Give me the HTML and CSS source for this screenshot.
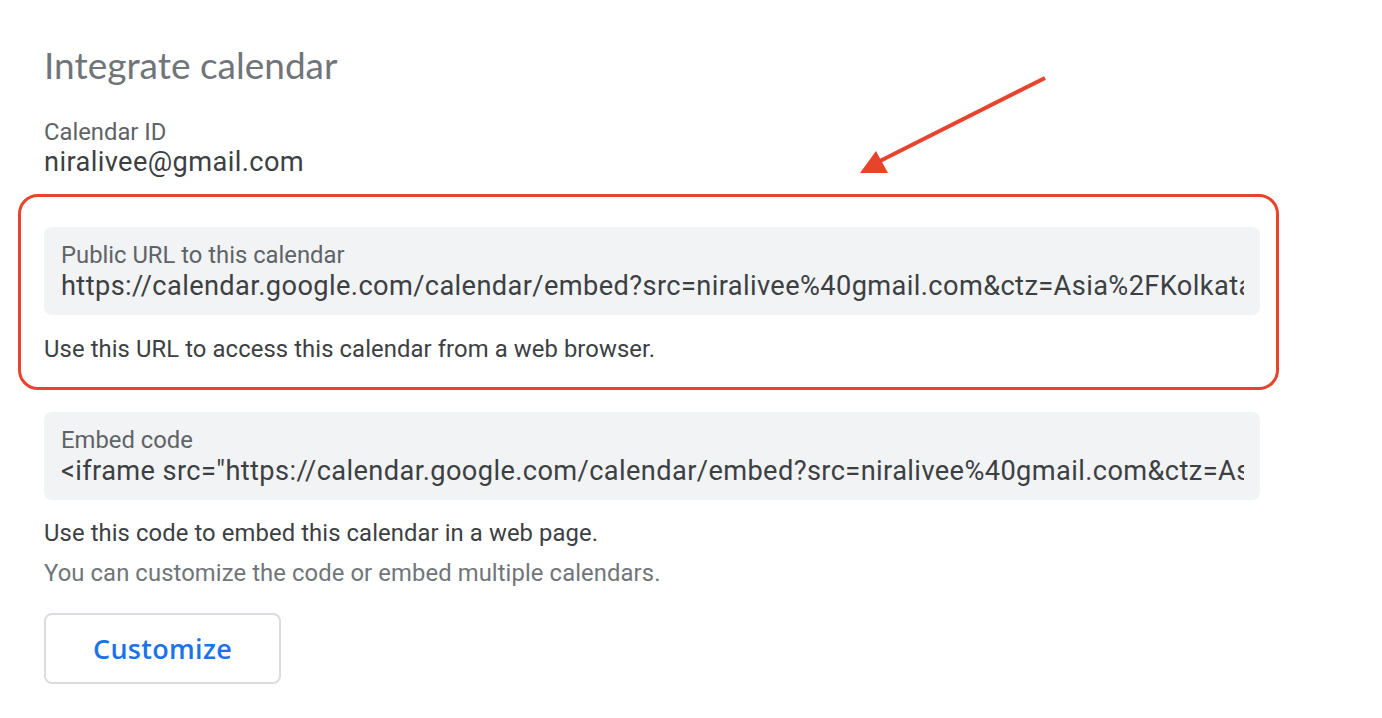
FILE: index.html
```html
<!DOCTYPE html>
<html>
<head>
<meta charset="utf-8">
<link rel="stylesheet" href="styles.css">
</head>
<body>
<main class="page">
  <h1 class="title">Integrate calendar</h1>
  <div class="field-plain">
    <div class="label">Calendar ID</div>
    <div class="value">niralivee@gmail.com</div>
  </div>
  <section class="annot">
    <div class="box">
      <div class="box-label">Public URL to this calendar</div>
      <div class="box-value">https://calendar.google.com/calendar/embed?src=niralivee%40gmail.com&amp;ctz=Asia%2FKolkata</div>
    </div>
    <p class="hint hint-annot">Use this URL to access this calendar from a web browser.</p>
  </section>
  <div class="box box-embed">
    <div class="box-label">Embed code</div>
    <div class="box-value">&lt;iframe src="https://calendar.google.com/calendar/embed?src=niralivee%40gmail.com&amp;ctz=Asia%2FKolkata" style="border: 0" width="800" height="600" frameborder="0" scrolling="no"&gt;&lt;/iframe&gt;</div>
  </div>
  <p class="hint hint-code">Use this code to embed this calendar in a web page.</p>
  <p class="hint secondary">You can customize the code or embed multiple calendars.</p>
  <button class="btn">Customize</button>
  <svg class="arrow" width="200" height="110" viewBox="850 70 200 110">
    <line x1="1045" y1="78" x2="878" y2="162" stroke="#e8432d" stroke-width="4"/>
    <polygon points="860,173 876,151 888,173" fill="#e8432d"/>
  </svg>
</main>
</body>
</html>
```
FILE: styles.css
```css
html, body {
  margin: 0;
  padding: 0;
  background: #ffffff;
}
body {
  font-family: Roboto, "Liberation Sans", Arial, sans-serif;
  color: #3c4043;
}
.page {
  position: relative;
  width: 1216px;
  padding: 43px 0 0 44px;
}
.title {
  margin: 0;
  font-family: Lato, "Open Sans", Roboto, sans-serif;
  font-weight: 400;
  font-size: 37px;
  line-height: 44px;
  color: #70757a;
}
.field-plain {
  margin-top: 31px;
}
.label {
  font-size: 23.8px;
  line-height: 28px;
  color: #5f6368;
}
.value {
  font-size: 27.2px;
  line-height: 33px;
  letter-spacing: 0.4px;
  color: #3c4043;
}
.annot {
  margin: 15px -19px 0 -26px;
  border: 3px solid #e8432d;
  border-radius: 20px;
  padding: 30px 16px 24px 23px;
}
.box {
  background: #f1f3f4;
  border-radius: 8px;
  height: 88px;
  padding: 14px 16px 0 17px;
  box-sizing: border-box;
  overflow: hidden;
}
.box-label {
  font-size: 23.8px;
  line-height: 28px;
  color: #5f6368;
  white-space: nowrap;
}
.box-value {
  margin-top: 1px;
  font-size: 27.2px;
  line-height: 33px;
  letter-spacing: 0.4px;
  color: #3c4043;
  white-space: nowrap;
  overflow: hidden;
}
.hint {
  margin: 0;
  font-size: 23.8px;
  line-height: 28px;
  letter-spacing: 0.1px;
  color: #3c4043;
}
.hint-annot {
  margin-top: 20px;
}
.box-embed {
  margin-top: 22px;
}
.hint-code {
  margin-top: 19px;
}
.secondary {
  margin-top: 12px;
  color: #70757a;
}
.btn {
  display: block;
  margin-top: 26px;
  width: 237px;
  height: 71px;
  background: #ffffff;
  border: 2px solid #dadce0;
  border-radius: 8px;
  font-family: "Open Sans", Roboto, sans-serif;
  font-size: 27px;
  font-weight: 600;
  letter-spacing: 0.3px;
  color: #1a73e8;
  padding: 0;
}
.arrow {
  position: absolute;
  left: 850px;
  top: 70px;
}
```
